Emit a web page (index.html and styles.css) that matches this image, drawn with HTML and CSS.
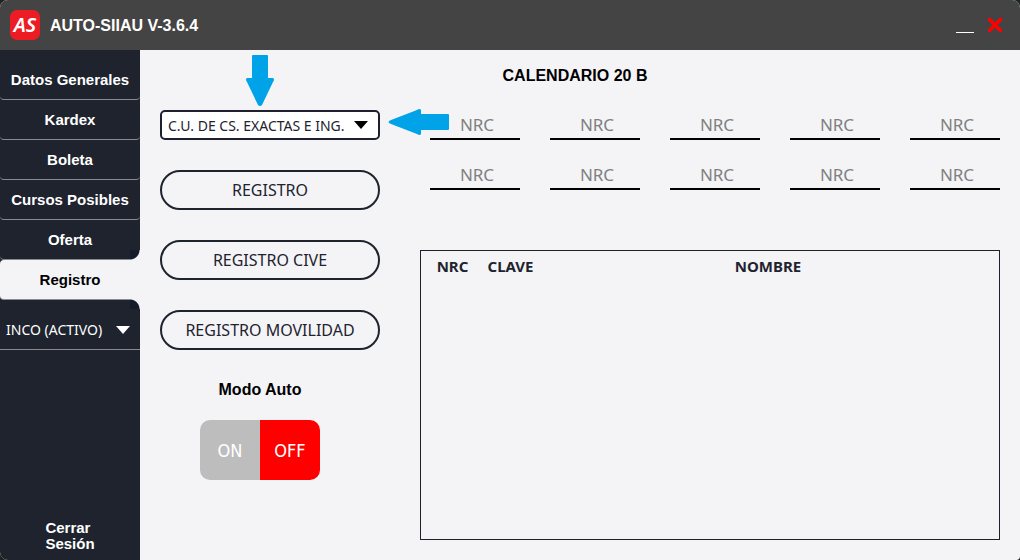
FILE: index.html
```html
<!DOCTYPE html>
<html lang="es">
<head>
<meta charset="utf-8">
<meta name="viewport" content="width=device-width, initial-scale=1">
<title>AUTO-SIIAU V-3.6.4</title>
<link rel="stylesheet" href="styles.css">
</head>
<body>
<div class="window">
  <header class="titlebar">
    <span class="logo">AS</span>
    <h1 class="app-name">AUTO-SIIAU V-3.6.4</h1>
    <button class="window-btn" type="button" aria-label="Minimizar">
      <svg width="20" height="20" viewBox="0 0 20 20"><path d="M1 17.5H19" stroke="#fff" stroke-width="1"/></svg>
    </button>
    <button class="window-btn" type="button" aria-label="Cerrar">
      <svg width="20" height="20" viewBox="0 0 20 20"><path d="M4.5 4.5L15.5 15.5M15.5 4.5L4.5 15.5" stroke="#f00" stroke-width="3.6" stroke-linecap="round"/></svg>
    </button>
  </header>
  <div class="body">
    <aside class="sidebar">
      <nav class="nav">
        <a class="nav-item" href="#datos">Datos Generales</a>
        <a class="nav-item" href="#kardex">Kardex</a>
        <a class="nav-item" href="#boleta">Boleta</a>
        <a class="nav-item" href="#cursos">Cursos Posibles</a>
        <a class="nav-item" href="#oferta">Oferta</a>
        <a class="nav-item active" href="#registro" aria-current="page">Registro</a>
      </nav>
      <div class="picker career">
        <select class="picker-select" aria-label="Carrera"><option>INCO (ACTIVO)</option></select>
        <svg class="picker-arrow" width="14" height="8" viewBox="0 0 14 8"><path d="M0 0H14L7 8Z" fill="#fff"/></svg>
      </div>
      <button class="logout" type="button">Cerrar<br>Sesión</button>
    </aside>
    <main class="content">
      <h2 class="title">CALENDARIO 20 B</h2>
      <div class="columns">
        <section class="actions">
          <div class="picker campus">
            <select class="picker-select" aria-label="Centro universitario"><option>C.U. DE CS. EXACTAS E ING.</option></select>
            <svg class="picker-arrow" width="14" height="8" viewBox="0 0 14 8"><path d="M0 0H14L7 8Z" fill="#000"/></svg>
            <svg class="hint hint-down" width="28" height="52" viewBox="0 0 28 52"><path d="M6 1Q6 0 7 0H21Q22 0 22 1V23H27Q29 24 27 27L16 50Q14 52 12 50L1 27Q-1 24 1 23H6Z" fill="#00a2e8"/></svg>
            <svg class="hint hint-left" width="61" height="26" viewBox="0 0 61 26"><path d="M60 5Q61 5 61 6V20Q61 21 60 21H33V25Q32 27 29 25L3 15Q-2 13 3 11L29 1Q32 -1 33 1V5Z" fill="#00a2e8"/></svg>
          </div>
          <button class="pill" type="button">REGISTRO</button>
          <button class="pill" type="button">REGISTRO CIVE</button>
          <button class="pill" type="button">REGISTRO MOVILIDAD</button>
          <div class="auto" role="group" aria-labelledby="auto-label">
            <h3 class="auto-label" id="auto-label">Modo Auto</h3>
            <div class="toggle">
              <button class="toggle-btn" type="button" aria-pressed="false">ON</button>
              <button class="toggle-btn selected" type="button" aria-pressed="true">OFF</button>
            </div>
          </div>
        </section>
        <section class="courses">
          <div class="codes">
            <input class="code" type="text" placeholder="NRC" aria-label="NRC 1">
            <input class="code" type="text" placeholder="NRC" aria-label="NRC 2">
            <input class="code" type="text" placeholder="NRC" aria-label="NRC 3">
            <input class="code" type="text" placeholder="NRC" aria-label="NRC 4">
            <input class="code" type="text" placeholder="NRC" aria-label="NRC 5">
            <input class="code" type="text" placeholder="NRC" aria-label="NRC 6">
            <input class="code" type="text" placeholder="NRC" aria-label="NRC 7">
            <input class="code" type="text" placeholder="NRC" aria-label="NRC 8">
            <input class="code" type="text" placeholder="NRC" aria-label="NRC 9">
            <input class="code" type="text" placeholder="NRC" aria-label="NRC 10">
          </div>
          <div class="results">
            <table class="results-table">
              <thead><tr><th class="col-nrc">NRC</th><th class="col-clave">CLAVE</th><th>NOMBRE</th></tr></thead>
            </table>
          </div>
        </section>
      </div>
    </main>
  </div>
</div>
</body>
</html>
```
FILE: styles.css
```css
* {
  box-sizing: border-box;
}

body {
  margin: 0;
  background: #1e2420;
  font-family: "Liberation Sans", Arial, sans-serif;
}

button,
select,
input {
  margin: 0;
  padding: 0;
  border: 0;
  background: none;
  font: inherit;
  color: inherit;
}

.window {
  display: flex;
  flex-direction: column;
  min-height: 100vh;
  border-radius: 8px 8px 4px 8px;
  overflow: hidden;
  background: #f4f4f7;
}

.titlebar {
  display: flex;
  align-items: center;
  gap: 10px;
  height: 50px;
  padding: 0 15px 0 10px;
  background: #444;
  color: #fff;
}

.logo {
  width: 30px;
  height: 30px;
  border-radius: 7px;
  background: #ed1c24;
  font: italic 600 20px/30px "Noto Sans", sans-serif;
  text-align: center;
}

.app-name {
  flex: 1;
  margin: 0;
  padding-top: 2px;
  font-size: 16px;
}

.window-btn {
  display: flex;
}

.body {
  flex: 1;
  display: grid;
  grid-template-columns: 140px 1fr;
}

.sidebar {
  display: flex;
  flex-direction: column;
  padding: 10px 0 8px;
  background: #1e232e;
  color: #fff;
}

.nav-item {
  display: block;
  height: 40px;
  border-bottom: 1px solid #8b8b8f;
  border-radius: 4px;
  color: #fff;
  font-size: 15px;
  font-weight: bold;
  line-height: 40px;
  text-align: center;
  text-decoration: none;
}

.active {
  position: relative;
  border-radius: 4px 0 0 4px;
  background: #f4f4f7;
  color: #000;
}

.active::before,
.active::after {
  content: "";
  position: absolute;
  right: 0;
  width: 10px;
  height: 10px;
}

.active::before {
  bottom: 100%;
  background: radial-gradient(circle at 0 0, #141b2a 9px, #f4f4f7 10px);
}

.active::after {
  top: 100%;
  background: radial-gradient(circle at 0 100%, #141b2a 9px, #f4f4f7 10px);
}

.picker {
  position: relative;
  display: grid;
  align-items: center;
  font-family: "Noto Sans", sans-serif;
}

.picker-select {
  grid-area: 1 / 1;
  width: 100%;
  height: 100%;
  appearance: none;
}

.picker-arrow {
  grid-area: 1 / 1;
  justify-self: end;
  margin-right: 10px;
  pointer-events: none;
}

.career {
  height: 40px;
  margin-top: 10px;
  border-bottom: 1px solid #8b8b8f;
  font-size: 14px;
}

.career .picker-select {
  padding-left: 6px;
}

.campus {
  height: 30px;
  border: 2px solid #1e2030;
  border-radius: 5px;
  background: #fff;
  color: #1e232e;
  font-size: 14px;
}

.campus .picker-select {
  padding-left: 6px;
}

.hint {
  position: absolute;
  pointer-events: none;
}

.hint-down {
  bottom: 31px;
  left: 84px;
}

.hint-left {
  top: -3px;
  left: 226px;
}

.logout {
  margin: auto auto 0;
  font-size: 15px;
  font-weight: bold;
  line-height: 16px;
  text-align: left;
}

.content {
  display: flex;
  flex-direction: column;
  padding: 0 20px 20px;
}

.title {
  height: 50px;
  margin: 0;
  padding-right: 10px;
  font-size: 16px;
  line-height: 52px;
  text-align: center;
}

.columns {
  flex: 1;
  display: grid;
  grid-template-columns: 220px 1fr;
  gap: 40px;
  padding-top: 10px;
}

.actions {
  display: flex;
  flex-direction: column;
  gap: 30px;
}

.pill {
  height: 40px;
  border: 2px solid #1e232e;
  border-radius: 20px;
  color: #1e232e;
  font-family: "Noto Sans", sans-serif;
  font-size: 16px;
}

.auto {
  display: flex;
  flex-direction: column;
  align-items: center;
  gap: 20px;
  padding-right: 20px;
}

.auto-label {
  margin: 0;
  font-size: 16px;
  line-height: 20px;
}

.toggle {
  display: flex;
  border-radius: 10px;
  overflow: hidden;
  color: #fff;
  font-family: "DejaVu Sans Condensed", "Liberation Sans", sans-serif;
  font-size: 18px;
}

.toggle-btn {
  width: 60px;
  height: 60px;
  background: #bdbdbd;
}

.selected {
  background: #f00;
}

.courses {
  display: flex;
  flex-direction: column;
  gap: 60px;
}

.codes {
  display: grid;
  grid-template-columns: repeat(5, 1fr);
  gap: 20px 30px;
  padding-left: 10px;
}

.code {
  width: 100%;
  height: 30px;
  padding-left: 4px;
  border-bottom: 2px solid #000;
  font-family: "Noto Sans", sans-serif;
  font-size: 17px;
  text-align: center;
}

.code::placeholder {
  color: #808080;
  opacity: 1;
}

.results {
  flex: 1;
  border: 1px solid #1e2030;
}

.results-table {
  width: 100%;
  border-collapse: collapse;
  table-layout: fixed;
  color: #1e232e;
  font-family: "Noto Sans", sans-serif;
  font-size: 15px;
}

.results-table th {
  height: 30px;
  padding: 0;
}

.col-nrc {
  width: 63px;
}

.col-clave {
  width: 53px;
}
```
